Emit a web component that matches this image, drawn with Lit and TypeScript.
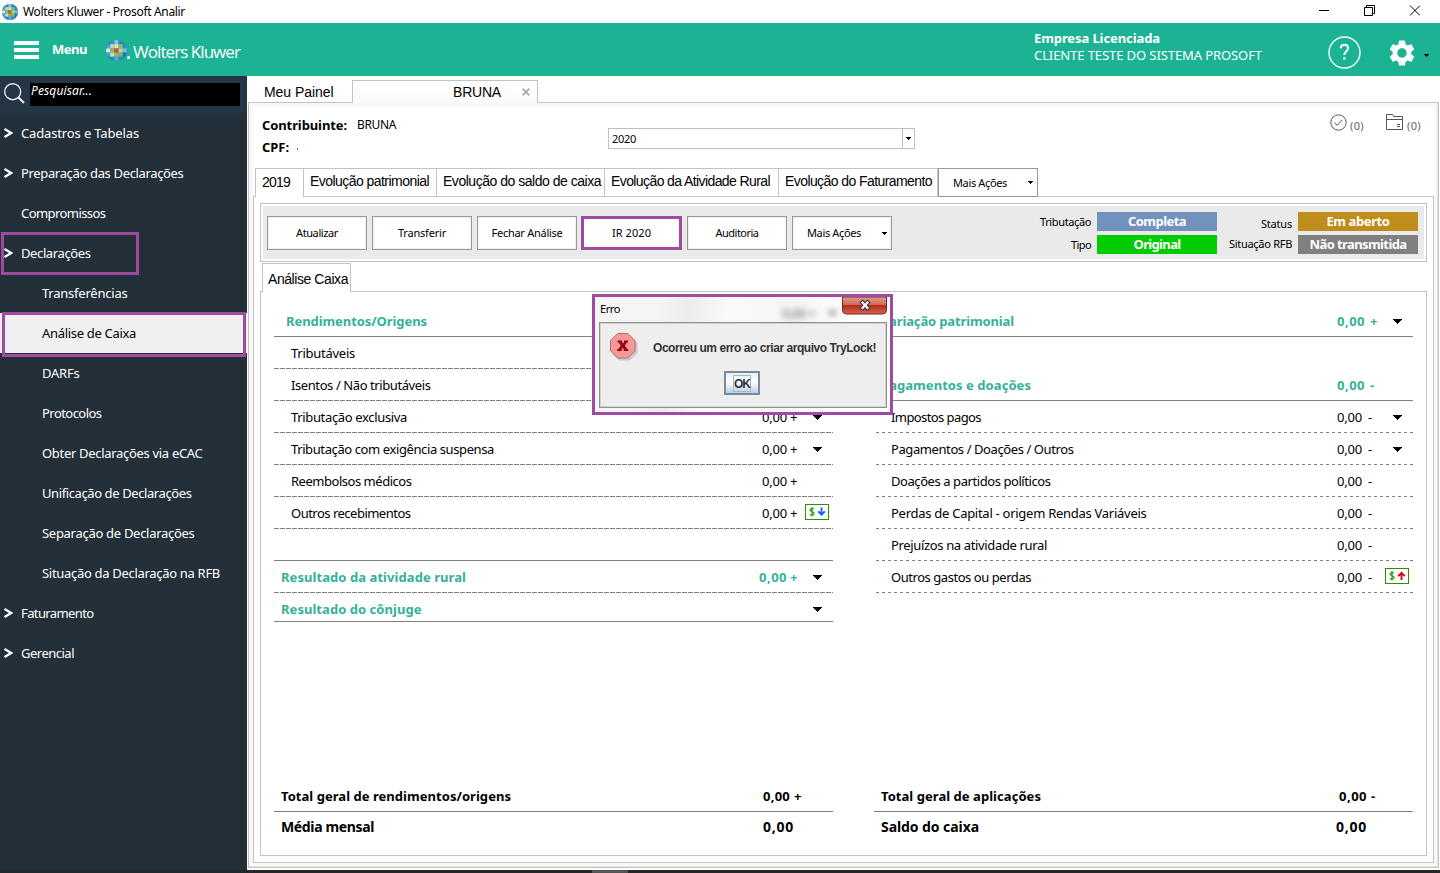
import { LitElement, html, css, svg, nothing } from "lit";
import { customElement, property } from "lit/decorators.js";
import { classMap } from "lit/directives/class-map.js";

/** Inline label whose tracking is adjusted so that it fills a given width. */
@customElement("fit-text")
class FitText extends LitElement {
  @property({ type: Number }) w = 0;
  static styles = css`
    :host { display: inline-block; justify-self: start; white-space: nowrap; flex: none; }
  `;
  updated() {
    if (!this.w) return;
    this.style.letterSpacing = "0px";
    const n = (this.textContent || "").trim().length;
    const natural = this.getBoundingClientRect().width;
    this.style.letterSpacing = `${(this.w - natural) / n}px`;
  }
  render() {
    return html`<slot></slot>`;
  }
}

const t = (text: string, w: number, cls = "") => html`<fit-text class=${cls} w=${w}>${text}</fit-text>`;

const caret = (cls = "") => html`<svg class="caret ${cls}" width="9" height="5" viewBox="0 0 9 5" shape-rendering="crispEdges">
  <path d="M0 0H9V1H8V2H7V3H6V4H5V5H4V4H3V3H2V2H1V1H0Z" fill="#000" /></svg>`;
const smallCaret = (cls = "") => html`<svg class="caret ${cls}" width="5" height="3" viewBox="0 0 5 3" shape-rendering="crispEdges">
  <path d="M0 0H5V1H4V2H3V3H2V2H1V1H0Z" fill="#000" /></svg>`;

const GLOBE = [
  ["#1b77c0", "#3c8fd0", "#8cc0e4", "#2f86cc", "#1b77c0"],
  ["#5a9fd4", "#c2dc9a", "#d7e8c0", "#8cc152", "#2a8fd6"],
  ["#d6e6f0", "#8cc152", "#e8453c", "#b9d98c", "#7db8e0"],
  ["#4a98d2", "#c9e0a8", "#8cc152", "#7fba48", "#2272bb"],
  ["#2272bb", "#2b88ce", "#5aa5da", "#2b88ce", "#1b77c0"],
];
const globe = (size: number, id: string) => html`<svg width=${size} height=${size} viewBox="0 0 20 20">
  <clipPath id=${id}><circle cx="10" cy="10" r="10" /></clipPath>
  <g clip-path="url(#${id})">
    <rect width="20" height="20" fill="#3a85c4" />
    ${GLOBE.map((r, y) => r.map((c, x) => svg`<rect x=${x * 4} y=${y * 4} width="4" height="4" fill=${c} />`))}
  </g></svg>`;

const money = (up: boolean) => html`<svg class="money" width="24" height="16" viewBox="0 0 24 16">
  <rect x=".5" y=".5" width="23" height="15" fill="#fff" stroke="#2f8f00" />
  <path d="M9 5.1C8.4 4.4 5 4 5 6.1C5 8 9.1 7.4 9.1 9.6C9.1 11.8 5.4 11.4 4.8 10.5M7 3V12.6" fill="none" stroke="#3c9a1c" stroke-width="1.3" />
  ${up
    ? svg`<path d="M16.5 12V5M13.2 8.2L16.5 4.8L19.8 8.2" fill="none" stroke="#d8001c" stroke-width="1.9" />`
    : svg`<path d="M16.5 3.5V10.5M13.2 7.3L16.5 10.7L19.8 7.3" fill="none" stroke="#0a64ff" stroke-width="1.9" />`}
</svg>`;

interface NavItem { text: string; w: number; arrow?: boolean; sub?: boolean; on?: boolean; mark?: boolean; }
const NAV: NavItem[] = [
  { text: "Cadastros e Tabelas", w: 118, arrow: true },
  { text: "Preparação das Declarações", w: 162.5, arrow: true },
  { text: "Compromissos", w: 84.5 },
  { text: "Declarações", w: 69.5, arrow: true, mark: true },
  { text: "Transferências", w: 85.5, sub: true },
  { text: "Análise de Caixa", w: 94, sub: true, on: true },
  { text: "DARFs", w: 37.5, sub: true },
  { text: "Protocolos", w: 59.5, sub: true },
  { text: "Obter Declarações via eCAC", w: 160.5, sub: true },
  { text: "Unificação de Declarações", w: 149.5, sub: true },
  { text: "Separação de Declarações", w: 152.5, sub: true },
  { text: "Situação da Declaração na RFB", w: 178, sub: true },
  { text: "Faturamento", w: 72.5, arrow: true },
  { text: "Gerencial", w: 53, arrow: true },
];

interface Row {
  text?: string; w?: number; kind?: "title" | "head"; value?: boolean; sign?: string;
  caret?: boolean; money?: "up" | "down"; line: "solid" | "dash" | "none"; short?: boolean;
}
const LEFT: Row[] = [
  { text: "Rendimentos/Origens", w: 141, kind: "title", line: "solid" },
  { text: "Tributáveis", w: 64, line: "dash" },
  { text: "Isentos / Não tributáveis", w: 139.5, line: "dash" },
  { text: "Tributação exclusiva", w: 116, value: true, sign: "+", caret: true, line: "dash" },
  { text: "Tributação com exigência suspensa", w: 203, value: true, sign: "+", caret: true, line: "dash" },
  { text: "Reembolsos médicos", w: 120.5, value: true, sign: "+", line: "dash" },
  { text: "Outros recebimentos", w: 119.5, value: true, sign: "+", money: "down", line: "dash" },
  { line: "solid" },
  { text: "Resultado da atividade rural", w: 185, kind: "head", value: true, sign: "+", caret: true, line: "dash" },
  { text: "Resultado do cônjuge", w: 140.5, kind: "head", caret: true, line: "solid", short: true },
];
const RIGHT: Row[] = [
  { text: "Variação patrimonial", w: 133, kind: "head", value: true, sign: "+", caret: true, line: "solid" },
  { line: "none" },
  { text: "Pagamentos e doações", w: 150, kind: "head", value: true, sign: "-", line: "solid" },
  { text: "Impostos pagos", w: 90, value: true, sign: "-", caret: true, line: "dash" },
  { text: "Pagamentos / Doações / Outros", w: 182.5, value: true, sign: "-", caret: true, line: "dash" },
  { text: "Doações a partidos políticos", w: 159.5, value: true, sign: "-", line: "dash" },
  { text: "Perdas de Capital - origem Rendas Variáveis", w: 255.5, value: true, sign: "-", line: "dash" },
  { text: "Prejuízos na atividade rural", w: 156, value: true, sign: "-", line: "dash" },
  { text: "Outros gastos ou perdas", w: 140, value: true, sign: "-", money: "up", line: "dash" },
];

@customElement("app-root")
class AppRoot extends LitElement {
  static styles = css`
    :host {
      display: grid; grid-template-rows: 23px 53px 794px 3px; width: 1440px; height: 873px;
      overflow: hidden; background: #fff; color: #000;
      font: 13px/16px "Noto Sans", "Open Sans", sans-serif;
    }
    * { box-sizing: border-box; }
    svg { display: block; flex: none; }
    .b { font-weight: 700; }
    .arial { font-family: "Liberation Sans", Arial, sans-serif; font-size: 14px; }
    .s11 { font-size: 11px; }
    .s12 { font-size: 12px; }

    .titlebar { display: flex; align-items: center; padding-left: 2px; font-size: 12px; }
    .titlebar .name { margin-left: 5px; }
    .winctl { margin-left: auto; margin-right: 20px; margin-top: -3px; }

    .header { display: flex; align-items: flex-start; background: #1cb394; color: #fff; padding-left: 14px; }
    .burger { margin-top: 18px; }
    .menu { margin: 18px 19px 0 13px; }
    .brandicon { margin-top: 17px; }
    .brand { font: 17px/22px "Open Sans", sans-serif; margin: 18px 0 0 3px; }
    .licensed { margin: 7px 0 0 auto; width: 228px; display: grid; line-height: 17px; }
    .help { margin: 13px 0 0 66px; }
    .gear { margin: 17px 0 0 28px; }
    .header .caret { margin: 31px 11px 0 9px; }

    .body { display: grid; grid-template-columns: 247px 1193px; }
    .side { background: #232f39; color: #fff; }
    .search { height: 37px; background: #243645; display: flex; padding: 7px 0 0 4px; }
    .field { width: 210px; height: 23px; margin-left: 5px; background: #000; padding-left: 1px; font-style: italic; font-size: 12px; line-height: 15px; }
    .nav { height: 40px; padding-left: 4px; display: grid; grid-template-columns: 17px auto; align-items: center; justify-content: start; position: relative; }
    .nav.sub { padding-left: 25px; }
    .nav.on { background: #f0f0f0; color: #000; }
    .nav fit-text { grid-column: 2; }
    .mark { position: absolute; border: 3px solid #a04ba2; pointer-events: none; }
    .mark.parent { left: 1px; top: -1px; width: 138px; height: 43px; }
    .mark.child { left: 2px; top: -1px; width: 244px; height: 45px; }

    .main { padding: 4px 1px 2px 1px; display: flex; flex-direction: column; }
    .tabs { display: flex; height: 22px; }
    .tab0 { width: 104px; padding: 4px 0 0 16px; }
    .tab1 { width: 186px; height: 23px; border: 1px solid #c3c3c3; border-bottom: 0; background: linear-gradient(#fff, #fafafa); padding: 3px 7px 0 100px; display: flex; justify-content: space-between; z-index: 1; }
    .tab1 svg { margin-top: 4px; }
    .frame { flex: 1; border: 1px solid #c3c3c3; background: #f8f8f8; padding: 4px; box-shadow: inset -1px -1px #e4e4e4; }
    .page { height: 100%; background: #fff; display: flex; flex-direction: column; }
    .who { display: grid; grid-template-columns: 346px 307px 1fr; height: 61px; padding-left: 9px; }
    .id { padding-top: 10px; display: grid; grid-template-rows: 22px 22px; align-content: start; }
    .id div { display: flex; gap: 10px; }
    .id .dot { width: 1px; height: 2px; background: #866; margin-top: 9px; margin-left: -2px; }
    .combo { height: 21px; margin-top: 21px; border: 1px solid #c0c0c0; display: flex; align-items: center; padding-left: 3px; }
    .combo span { margin-left: auto; width: 12px; height: 19px; border-left: 1px solid #c0c0c0; display: grid; place-content: center; }
    .counts { display: flex; justify-content: flex-end; padding: 7px 13px 0 0; color: #666; font-size: 11px; }
    .counts fit-text { margin-top: 4px; }
    .counts .c1 { margin: 4px 22px 0 3px; }
    .counts .c2 { margin-left: 4px; }

    .subtabs { display: flex; height: 29px; padding-left: 2px; position: relative; z-index: 1; margin-bottom: -1px; }
    .st { border: 1px solid #c3c3c3; border-left: 0; height: 29px; padding: 4px 0 0 6px; }
    .st.first { border-left: 1px solid #c3c3c3; border-bottom: 0; background: #fff; padding: 5px 0 0 6px; width: 49px; }
    .st.a { width: 133px; } .st.b1 { width: 168px; } .st.c { width: 174px; } .st.d { width: 159px; }
    .btn { width: 100px; height: 34px; background: #fff; border: 1px solid #999; display: grid; place-content: center; box-shadow: inset 0 0 0 1px #f1f1f1; font-size: 11px; }
    .btn.drop { display: flex; align-items: center; justify-content: space-between; padding: 0 4px 0 14px; }
    .btn.tabbtn { height: 29px; box-shadow: none; font-family: "Noto Sans", sans-serif; }
    .btn.hot { border: 3px solid #a04ba2; box-shadow: none; width: 101px; margin: 0 0 0 -1px; }

    .sheet { flex: none; width: 1181px; height: 667px; border: 1px solid #c3c3c3; padding: 6px; }
    .tools { height: 59px; border: 1px solid #c3c3c3; padding: 2px; }
    .strip { height: 53px; background: #eaeaea; padding: 3px 6px 0 4px; display: flex; }
    .btns { display: flex; gap: 5px; margin-top: 7px; width: 753px; }
    .status { margin: 3px 0 0 auto; display: grid; grid-template-columns: 58px 120px 81px 120px; grid-template-rows: 19px 19px; row-gap: 4px; }
    .status .l { text-align: right; padding-right: 6px; font-size: 11px; line-height: 20px; }
    .status .l.low { line-height: 24px; }
    .status .l.up { line-height: 18px; }
    .status .v { height: 19px; color: #fff; font-weight: 700; text-align: center; line-height: 18px; }
    .blue { background: #7391bd; } .green { background: #00cc00; } .gold { background: #be8d1c; } .grey { background: #808080; }
    .cashtab { width: 89px; height: 29px; margin: 1px 0 -1px 1px; border: 1px solid #c3c3c3; border-bottom: 0; background: #fff; padding: 7px 0 0 5px; position: relative; left: 1px; }
    .cash { height: 565px; width: 1167px; border: 1px solid #c3c3c3; padding: 13px 13px 0 13px; display: flex; flex-direction: column; justify-content: space-between; }
    .cols { display: grid; grid-template-columns: 559px 537px; justify-content: space-between; align-items: start; }
    .row { height: 32px; display: grid; grid-template-columns: 488px 28px 15px 28px; align-items: center; position: relative; line-height: 30px; }
    .row.short { height: 29px; }
    .right .row { grid-template-columns: 461px 31px 17px 28px; }
    .row .lab { padding-left: 17px; }
    .right .row .lab { padding-left: 15px; }
    .row.title .lab { padding-left: 12px; }
    .row.head .lab { padding-left: 7px; }
    .right .row.head .lab { padding-left: 5px; }
    .row.head, .row.title { color: #35b198; font-weight: 700; }
    .row.head .val, .row.title .val { margin-left: -3px; }
    .right .row.head .val { margin-left: 0; }
    .right .row.head .sign { padding-left: 2px; }
    .row.head .sign { font-weight: 700; }
    .row .sign { font-weight: 400; }
    .row.solid { border-bottom: 1px solid #808080; }
    .row.dash { background: repeating-linear-gradient(90deg, #808080 0 5px, transparent 5px 6px) bottom / 100% 1px no-repeat; }
    .right .row.dash { background-image: repeating-linear-gradient(90deg, #808080 0 3px, transparent 3px 6px); }
    .row .extra { display: grid; place-content: center start; grid-column: 4; height: 31px; }
    .row .extra .caret { margin: 1px 0 0 8px; }
    .right .row .extra .caret { margin-left: 8px; }
    .row .extra .money { margin: -3px 0 0 0; }

    .totals { display: grid; grid-template-columns: 559px 539px; justify-content: space-between; padding-bottom: 18px; font-weight: 700; }
    .tot { height: 30px; border-bottom: 1px solid #808080; display: grid; grid-template-columns: 482px 31px auto; padding-left: 7px; line-height: 28px; }
    .tot.last { border: 0; height: 25px; line-height: 30px; font-size: 14px; }
    .totals .r .tot { grid-template-columns: 458px 32px auto; }
    .totals .r .tot.last { grid-template-columns: 455px 32px auto; }

    .taskbar { background: #242629; display: flex; padding-left: 592px; }
    .taskbar span { width: 36px; background: #555; }

    .dialog { position: absolute; left: 592px; top: 294px; width: 301px; height: 121px; border: 3px solid #a04ba2; background: linear-gradient(105deg, #f5f5f5 0 20%, #ececec 30%, #fafafa 42%, #f6f6f6 60%, #fff 85%); padding: 0 4px 3px; z-index: 5; }
    .dlgtop { height: 25px; display: flex; font-size: 11px; padding: 4px 0 0 1px; position: relative; }
    .ghost { position: absolute; left: 183px; top: 8px; width: 60px; filter: blur(3px); color: #555; display: flex; align-items: center; gap: 12px; line-height: 16px; font-size: 13px; }
    .ghost svg { opacity: .6; }
    .close { position: absolute; right: -1px; top: 0; }
    .dlgbody { height: 86px; width: 288px; border: 1px solid #8e8f8f; box-shadow: inset 0 0 0 1px #d2d2d2; background: #eee; padding: 9px 9px 8px; display: grid; grid-template-columns: 44px auto; grid-template-rows: 37px auto; }
    .msg { font: 700 12px/16px "Liberation Sans", Arial, sans-serif; color: #333; margin-top: 8px; }
    .ok { grid-column: 1 / 3; justify-self: start; margin-left: 115px; margin-top: 2px; width: 36px; height: 24px; border: 2px solid #7a8a99; background: linear-gradient(#e8f0f8, #fff 45%, #b8cfe5); display: grid; place-content: center; font: 700 12px/14px "Liberation Sans", Arial, sans-serif; color: #333; }
    .ok span { border: 1px solid #a3b8cc; padding: 1px 0; height: 17px; display: block; }
  `;

  private row(r: Row) {
    const green = !!r.kind;
    return html`<div class=${classMap({ row: true, [r.kind ?? "item"]: true, [r.line]: true, short: !!r.short })}>
      <div class="lab">${r.text ? t(r.text, r.w!) : nothing}</div>
      <div class="val">${r.value ? t("0,00", green ? 28 : 25) : nothing}</div>
      <div class="sign">${r.sign ? t(r.sign, r.sign === "+" ? (green ? 9 : 8) : 5) : nothing}</div>
      <div class="extra">${r.caret ? caret() : nothing}${r.money ? money(r.money === "up") : nothing}</div>
    </div>`;
  }

  render() {
    return html`
      <div class="titlebar">
        ${globe(16, "g1")}${t("Wolters Kluwer - Prosoft Analir", 162, "name")}
        <svg class="winctl" width="101" height="11" viewBox="0 0 101 11" fill="none" stroke="#000">
          <path d="M0 5.5H10" /><path d="M45.5 2.5H53.5V10.5H45.5ZM47.5 2.5V.5H55.5V8.5H53.5" /><path d="M91 .5L101 10.5M101 .5L91 10.5" />
        </svg>
      </div>

      <div class="header">
        <svg class="burger" width="25" height="18" viewBox="0 0 25 18" fill="#fff"><path d="M0 0H25V4H0ZM0 7H25V11H0ZM0 14H25V18H0Z" /></svg>
        ${t("Menu", 35, "b menu")}
        <span class="brandicon">${globe(21, "g2")}</span>
        <svg width="3" height="38" viewBox="0 0 3 38"><circle cx="1.5" cy="34.5" r="1.5" fill="#fff" /></svg>
        ${t("Wolters Kluwer", 107, "brand")}
        <div class="licensed">${t("Empresa Licenciada", 126, "b")}${t("CLIENTE TESTE DO SISTEMA PROSOFT", 228)}</div>
        <svg class="help" width="33" height="33" viewBox="0 0 33 33" fill="none" stroke="#fff">
          <circle cx="16.5" cy="16.5" r="15.5" stroke-width="1.4" />
          <path d="M12.7 12.2C13 7.6 20 7.6 20 12.2C20 15.2 16.4 15.4 16.4 19" stroke-width="2" /><path d="M16.4 21.2V23.6" stroke-width="2.2" />
        </svg>
        <svg class="gear" width="26" height="26" viewBox="2 2 20 20" fill="#fff"><path d="M19.14 12.94c.04-.3.06-.61.06-.94 0-.32-.02-.64-.07-.94l2.03-1.58c.18-.14.23-.41.12-.61l-1.92-3.32c-.12-.22-.37-.29-.59-.22l-2.39.96c-.5-.38-1.03-.7-1.62-.94l-.36-2.54c-.04-.24-.24-.41-.48-.41h-3.84c-.24 0-.43.17-.47.41l-.36 2.54c-.59.24-1.13.57-1.62.94l-2.39-.96c-.22-.08-.47 0-.59.22L2.74 8.87c-.12.21-.08.47.12.61l2.03 1.58c-.05.3-.09.63-.09.94s.02.64.07.94l-2.03 1.58c-.18.14-.23.41-.12.61l1.92 3.32c.12.22.37.29.59.22l2.39-.96c.5.38 1.03.7 1.62.94l.36 2.54c.05.24.24.41.48.41h3.84c.24 0 .44-.17.47-.41l.36-2.54c.59-.24 1.13-.56 1.62-.94l2.39.96c.22.08.47 0 .59-.22l1.92-3.32c.12-.22.07-.47-.12-.61l-2.01-1.58zM12 15.6c-1.98 0-3.6-1.62-3.6-3.6s1.62-3.6 3.6-3.6 3.6 1.62 3.6 3.6-1.62 3.6-3.6 3.6z" /></svg>
        ${smallCaret()}
      </div>

      <div class="body">
        <div class="side">
          <div class="search">
            <svg width="21" height="22" viewBox="0 0 21 22" fill="none" stroke="#e8eaec"><circle cx="8.7" cy="8.7" r="8" stroke-width="1.4" /><path d="M14.3 14.3L20 20" stroke-width="2.2" /></svg>
            <div class="field">${t("Pesquisar...", 61)}</div>
          </div>
          ${NAV.map((n) => html`<div class=${classMap({ nav: true, sub: !!n.sub, on: !!n.on })}>
            ${n.arrow ? html`<svg width="9" height="10" viewBox="0 0 9 10"><path d="M.5 1L7.3 5L.5 9" fill="none" stroke="#fff" stroke-width="2.3" /></svg>` : nothing}
            ${t(n.text, n.w)}
            ${n.mark ? html`<div class="mark parent"></div>` : nothing}
            ${n.on ? html`<div class="mark child"></div>` : nothing}
          </div>`)}
        </div>

        <div class="main">
          <div class="tabs">
            <div class="tab0 arial">${t("Meu Painel", 69.5)}</div>
            <div class="tab1 arial">${t("BRUNA", 48)}
              <svg width="8" height="8" viewBox="0 0 8 8"><path d="M.7 .7L7.3 7.3M7.3 .7L.7 7.3" stroke="#aaa" stroke-width="1.8" /></svg></div>
          </div>
          <div class="frame"><div class="page">
            <div class="who">
              <div class="id">
                <div>${t("Contribuinte:", 85, "b")}${t("BRUNA", 39, "s12")}</div>
                <div>${t("CPF:", 27, "b")}<span class="dot"></span></div>
              </div>
              <div class="combo s11">${t("2020", 24)}<span>${smallCaret()}</span></div>
              <div class="counts">
                <svg width="17" height="17" viewBox="0 0 17 17" fill="none" stroke="#555"><circle cx="8.5" cy="8.5" r="7.7" /><path d="M4.5 8.7L7.2 11.3L12.4 5.8" /></svg>
                ${t("(0)", 14, "c1")}
                <svg width="17" height="17" viewBox="0 0 17 17" fill="none" stroke="#555"><path d="M.5 15.5V.5H6.5L7.5 2.5H16.5V15.5ZM.5 5.5H16M11 10.5H14M11 12.5H14" /></svg>
                ${t("(0)", 14, "c2")}
              </div>
            </div>
            <div class="subtabs arial">
              <div class="st first">${t("2019", 28)}</div>
              <div class="st a">${t("Evolução patrimonial", 119)}</div>
              <div class="st b1">${t("Evolução do saldo de caixa", 158)}</div>
              <div class="st c">${t("Evolução da Atividade Rural", 159)}</div>
              <div class="st d">${t("Evolução do Faturamento", 147)}</div>
              <div class="btn drop tabbtn">${t("Mais Ações", 54)}${smallCaret()}</div>
            </div>
            <div class="sheet">
              <div class="tools"><div class="strip">
                <div class="btns">
                  <div class="btn">${t("Atualizar", 42)}</div>
                  <div class="btn">${t("Transferir", 48)}</div>
                  <div class="btn">${t("Fechar Análise", 71)}</div>
                  <div class="btn hot">${t("IR 2020", 39)}</div>
                  <div class="btn">${t("Auditoria", 43)}</div>
                  <div class="btn drop">${t("Mais Ações", 54)}${smallCaret()}</div>
                </div>
                <div class="status">
                  <div class="l">${t("Tributação", 51)}</div><div class="v blue">${t("Completa", 58)}</div>
                  <div class="l low">${t("Status", 31)}</div><div class="v gold">${t("Em aberto", 63)}</div>
                  <div class="l">${t("Tipo", 20)}</div><div class="v green">${t("Original", 47)}</div>
                  <div class="l up">${t("Situação RFB", 63)}</div><div class="v grey">${t("Não transmitida", 97)}</div>
                </div>
              </div></div>
              <div class="cashtab arial">${t("Análise Caixa", 80)}</div>
              <div class="cash">
                <div class="cols">
                  <div class="left">${LEFT.map((r) => this.row(r))}</div>
                  <div class="right">${RIGHT.map((r) => this.row(r))}</div>
                </div>
                <div class="totals">
                  <div>
                    <div class="tot">${t("Total geral de rendimentos/origens", 230)}${t("0,00", 27)}${t("+", 9)}</div>
                    <div class="tot last">${t("Média mensal", 93)}${t("0,00", 31)}</div>
                  </div>
                  <div class="r">
                    <div class="tot">${t("Total geral de aplicações", 160)}${t("0,00", 28)}${t("-", 5)}</div>
                    <div class="tot last">${t("Saldo do caixa", 98)}${t("0,00", 31)}</div>
                  </div>
                </div>
              </div>
            </div>
          </div></div>
        </div>
      </div>
      <div class="taskbar"><span></span></div>

      <div class="dialog">
        <div class="dlgtop">${t("Erro", 20)}
          <div class="ghost">${t("0,00 +", 34)}${caret()}</div>
          <svg class="close" width="45" height="18" viewBox="0 0 45 18">
            <defs><linearGradient id="red" x2="0" y2="1"><stop offset="0" stop-color="#e0a090" /><stop offset=".45" stop-color="#cf6a58" /><stop offset=".5" stop-color="#b42c1a" /><stop offset="1" stop-color="#d8644a" /></linearGradient></defs>
            <path d="M.5 0V13Q.5 17 4.5 17H40.5Q44.5 17 44.5 13V0Z" fill="url(#red)" stroke="#6b2a28" />
            <path d="M20.5 5.5L25.5 11M25.5 5.5L20.5 11" stroke="#46343a" stroke-width="4.4" stroke-linecap="square" />
            <path d="M20.5 5.5L25.5 11M25.5 5.5L20.5 11" stroke="#fff" stroke-width="2.2" stroke-linecap="square" />
          </svg>
        </div>
        <div class="dlgbody">
          <svg width="30" height="31" viewBox="0 0 30 31">
            <path d="M10 3.5H21L28.5 11V21L21 28.5H10L3 21V11Z" fill="#bbb" opacity=".7" />
            <path d="M8.7 1.5H18.8L26 8.7V18.8L18.8 26H8.7L1.5 18.8V8.7Z" fill="#f39a98" stroke="#b86a6c" />
            <path d="M8.5 8.5H13V10L14 11.6L15 10V8.5H19V10.5H18L15.8 13.6L18.2 17H19.3V19H14.7V17.3L13.7 15.7L12.7 17.3V19H8.3V17H9.4L11.8 13.6L9.6 10.5H8.5Z" fill="#a00010" />
          </svg>
          <div class="msg">${t("Ocorreu um erro ao criar arquivo TryLock!", 223)}</div>
          <div class="ok"><span>${t("OK", 16)}</span></div>
        </div>
      </div>
    `;
  }
}
